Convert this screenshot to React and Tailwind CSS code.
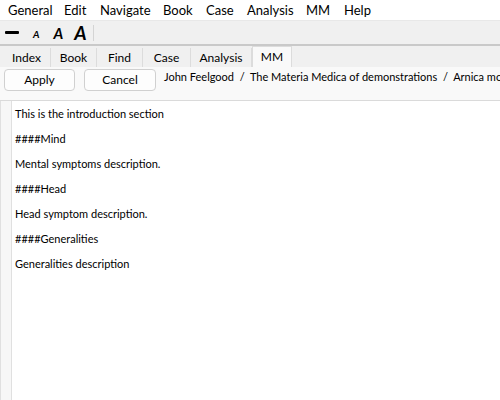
export default function App() {
  const menus = [
    { name: 'General', w: 'w-[56px]' },
    { name: 'Edit', w: 'w-[36px]' },
    { name: 'Navigate', w: 'w-[63px]' },
    { name: 'Book', w: 'w-[43px]' },
    { name: 'Case', w: 'w-[41px]' },
    { name: 'Analysis', w: 'w-[59px]' },
    { name: 'MM', w: 'w-[38px]' },
    { name: 'Help', w: 'w-[40px]' },
  ]
  const tabs = [
    { name: 'Index', w: 'w-[48px]' },
    { name: 'Book', w: 'w-[46px]' },
    { name: 'Find', w: 'w-[46px]' },
    { name: 'Case', w: 'w-[48px]' },
    { name: 'Analysis', w: 'w-[61px]' },
  ]
  const lines = [
    'This is the introduction section',
    '####Mind',
    'Mental symptoms description.',
    '####Head',
    'Head symptom description.',
    '####Generalities',
    'Generalities description',
  ]

  return (
    <div className="w-[500px] h-[400px] overflow-hidden bg-white text-black flex flex-col font-['Lato','Liberation_Sans',sans-serif]">
      {/* menu bar */}
      <div className="h-[21px] flex items-center pl-[8px] text-[13px] bg-white border-b border-[#e8e8e8] shrink-0">
        {menus.map((m) => (
          <span key={m.name} className={`${m.w} shrink-0 leading-none`}>{m.name}</span>
        ))}
      </div>

      {/* toolbar */}
      <div className="h-[25px] bg-[#f0f0f0] flex items-center pl-[5px] border-b-2 border-[#c9c9c9] shrink-0">
        <div className="w-[14px] h-[3px] bg-black rounded-[1px]" />
        <span className="ml-[14px] italic font-bold text-[10px] leading-none mt-[3px]">A</span>
        <span className="ml-[14px] italic font-bold text-[15px] leading-none mt-[1px]">A</span>
        <span className="ml-[11px] italic font-bold text-[19px] leading-none">A</span>
        <div className="ml-[6px] w-px h-[16px] bg-[#d4d4d4]" />
      </div>

      {/* tabs */}
      <div className="h-[21px] bg-[#f0f0f0] flex items-end pl-[3px] shrink-0 text-[12px]">
        {tabs.map((t) => (
          <div
            key={t.name}
            className={`${t.w} shrink-0 h-[19px] flex items-center justify-center border-r border-[#dcdcdc]`}
          >
            {t.name}
          </div>
        ))}
        <div className="w-[40px] shrink-0 h-[21px] bg-[#f9f9f9] flex items-center justify-center border-x border-t border-[#dcdcdc]">
          MM
        </div>
      </div>

      {/* action row */}
      <div className="h-[34px] bg-[#f9f9f9] flex items-start pt-[2px] pl-[4px] shrink-0 border-b border-[#dadada] text-[12px] overflow-hidden">
        <button className="shrink-0 w-[71px] h-[22px] bg-[#fdfdfd] border border-[#d0d0d0] rounded-[4px] leading-none">Apply</button>
        <button className="shrink-0 ml-[9px] w-[72px] h-[22px] bg-[#fdfdfd] border border-[#d0d0d0] rounded-[4px] leading-none">Cancel</button>
        <span className="shrink-0 ml-[8px] whitespace-nowrap leading-[16px] text-[11px]">
          John Feelgood&nbsp; /&nbsp; The Materia Medica of demonstrations&nbsp; /&nbsp; Arnica montana
        </span>
      </div>

      {/* body */}
      <div className="flex-1 flex min-h-0">
        <div className="w-[12px] shrink-0 bg-[#f7f7f7] border-l border-r border-[#e0e0e0]" />
        <div className="flex-1 bg-white pl-[3px] pt-[4px] text-[11px] flex flex-col gap-[7px]">
          {lines.map((l) => (
            <div key={l} className="h-[18px] leading-[18px] whitespace-nowrap">{l}</div>
          ))}
        </div>
      </div>
    </div>
  )
}
